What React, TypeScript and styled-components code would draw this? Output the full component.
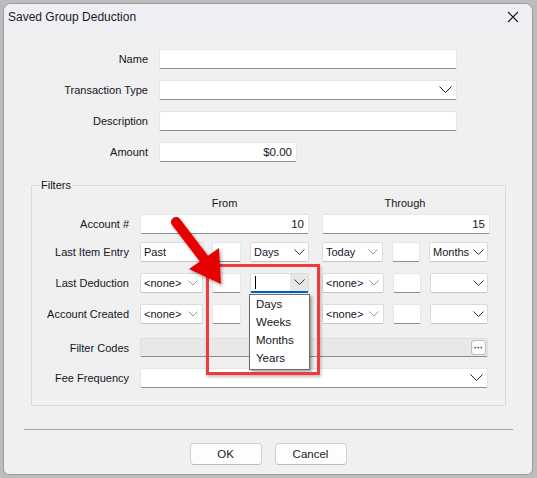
import React from 'react';
import styled, { createGlobalStyle } from 'styled-components';

const GlobalStyle = createGlobalStyle`
  html, body {
    margin: 0;
    padding: 0;
    background: #bcbcbc;
  }
  body {
    width: 537px;
    height: 478px;
    overflow: hidden;
    font-family: 'Liberation Sans', Arial, sans-serif;
    color: #14141f;
  }
`;

const Screen = styled.div`
  padding: 3px 4px 3px 3px;
  height: 478px;
  box-sizing: border-box;
`;

const Dialog = styled.div`
  position: relative;
  width: 530px;
  height: 472px;
  box-sizing: border-box;
  border: 1px solid #9c9c9c;
  border-radius: 8px 8px 6px 6px;
  background: #f0f0f0;
  overflow: hidden;
  display: flex;
  flex-direction: column;
`;

const TitleBar = styled.div`
  height: 26px;
  flex: none;
  background: #eff0f5;
  display: flex;
  align-items: center;
  justify-content: space-between;
  padding: 0 13px 0 4px;
`;

const Title = styled.span`
  font-size: 12px;
  color: #1a1a1a;
`;

const CloseButton = styled.button`
  border: none;
  background: none;
  padding: 0;
  width: 12px;
  height: 12px;
  display: flex;
`;

const Body = styled.div`
  flex: 1;
  display: flex;
  flex-direction: column;
  padding-top: 19px;
`;

const MainForm = styled.div`
  display: grid;
  grid-template-columns: 144px 298px;
  grid-auto-rows: 20px;
  column-gap: 11px;
  row-gap: 11px;
  align-items: center;
`;

const Label = styled.label`
  font-size: 11px;
  text-align: right;
  white-space: nowrap;
`;

const Field = styled.div<{ $width?: number; $align?: string; $disabled?: boolean }>`
  position: relative;
  box-sizing: border-box;
  height: 20px;
  width: ${({ $width }) => ($width ? `${$width}px` : '100%')};
  background: ${({ $disabled }) => ($disabled ? '#e8e8e8' : '#fff')};
  border: 1px solid ${({ $disabled }) => ($disabled ? '#dedede' : '#e6e6e6')};
  border-bottom-color: #8c8c8c;
  border-radius: 2px;
  display: flex;
  align-items: center;
  justify-content: ${({ $align }) => ($align === 'right' ? 'flex-end' : 'flex-start')};
  padding: 0 4px;
  font-size: 11.5px;
`;

const ComboBox = styled.div<{ $width?: number; $open?: boolean; $flat?: boolean }>`
  position: relative;
  box-sizing: border-box;
  height: 20px;
  width: ${({ $width }) => ($width ? `${$width}px` : '100%')};
  background: #fff;
  border: 1px solid ${({ $flat }) => ($flat ? '#e6e6e6' : '#dadada')};
  border-bottom: ${({ $open, $flat }) =>
    $open ? '2px solid #005fb8' : `1px solid ${$flat ? '#8c8c8c' : '#c4c4c4'}`};
  border-radius: 2px;
  display: flex;
  align-items: center;
  padding-left: 3px;
  font-size: 11.5px;
`;

const ComboText = styled.span`
  flex: 1;
  white-space: nowrap;
  overflow: hidden;
  font-size: 11px;
`;

const ChevronBox = styled.span<{ $hover?: boolean; $wide?: boolean }>`
  flex: none;
  width: ${({ $wide }) => ($wide ? '22px' : '18px')};
  align-self: stretch;
  display: flex;
  align-items: center;
  justify-content: center;
  background: ${({ $hover }) => ($hover ? '#e6e6e6' : 'transparent')};
`;

const Caret = styled.span`
  display: block;
  width: 1px;
  height: 13px;
  background: #000;
  margin-left: 1px;
`;

const Chevron = ({ color = '#333', w = 11 }: { color?: string; w?: number }) => (
  <svg width={w} height={Math.ceil(w / 2) + 1} viewBox={`0 0 ${w} ${Math.ceil(w / 2) + 1}`}>
    <polyline
      points={`0.5,0.5 ${w / 2},${w / 2} ${w - 0.5},0.5`}
      fill="none"
      stroke={color}
      strokeWidth="1"
    />
  </svg>
);

const Filters = styled.fieldset`
  margin: 17px 0 0 27px;
  width: 475px;
  box-sizing: border-box;
  border: 1px solid #d8d8d8;
  border-radius: 1px;
  padding: 5px 14px 17px 0;
`;

const Legend = styled.legend`
  font-size: 11px;
  padding: 0 2px;
  margin-left: 7px;
`;

const FilterRow = styled.div<{ $top: number; $height?: number }>`
  display: grid;
  grid-template-columns: 97px 169px 168px;
  column-gap: 11px;
  align-items: center;
  margin-top: ${({ $top }) => `${$top}px`};
  height: ${({ $height }) => `${$height ?? 20}px`};
  & > :nth-child(3) {
    margin-left: 2px;
  }
`;

const ColumnHead = styled.div`
  font-size: 11px;
  text-align: center;
`;

const Range = styled.div`
  display: flex;
  align-items: center;
  gap: 9px;
`;

const Span = styled.div`
  grid-column: 2 / span 2;
`;

const EllipsisButton = styled.button`
  position: absolute;
  right: 1px;
  top: 1px;
  width: 15px;
  height: 15px;
  padding: 0;
  box-sizing: border-box;
  border: 1px solid #bdbdbd;
  border-radius: 3px;
  background: #fdfdfd;
  font-size: 9px;
  line-height: 8px;
  font-weight: bold;
  color: #222;
  font-family: 'Liberation Sans', Arial, sans-serif;
`;

const DropList = styled.ul`
  position: absolute;
  left: -2px;
  top: 20px;
  width: 61px;
  margin: 0;
  padding: 0 0 2px;
  list-style: none;
  box-sizing: border-box;
  background: #fff;
  border: 1px solid #6b6b6b;
  box-shadow: 2px 2px 3px rgba(0, 0, 0, 0.35);
  z-index: 2;
`;

const DropItem = styled.li`
  height: 18px;
  line-height: 18px;
  padding-left: 6px;
  font-size: 11.5px;
`;

const Separator = styled.hr`
  margin: 23px 19px 0 20px;
  border: none;
  border-top: 1px solid #a5a5a5;
  height: 0;
`;

const Footer = styled.div`
  display: flex;
  justify-content: center;
  gap: 13px;
  margin-top: 13px;
`;

const Button = styled.button`
  width: 72px;
  height: 22px;
  box-sizing: border-box;
  border: 1px solid #d0d0d0;
  border-bottom-color: #bcbcbc;
  border-radius: 4px;
  background: #fdfdfd;
  font-size: 11.5px;
  color: #1a1a1a;
  font-family: 'Liberation Sans', Arial, sans-serif;
`;

const Highlight = styled.div`
  position: absolute;
  left: 202px;
  top: 260px;
  width: 114px;
  height: 111px;
  box-sizing: border-box;
  border: 3px solid #f03a3e;
  box-shadow: 1px 2px 3px rgba(0, 0, 0, 0.25);
  z-index: 3;
  pointer-events: none;
`;

const Pointer = styled.svg`
  position: absolute;
  left: 160px;
  top: 205px;
  z-index: 4;
  pointer-events: none;
`;

const units = ['Days', 'Weeks', 'Months', 'Years'];

// <none> / blank / unit triple used by the date filters
const DateRange = ({
  mode,
  unit,
  box,
  modeMuted = true,
  open = false,
}: {
  mode: string;
  unit?: string;
  box: number;
  modeMuted?: boolean;
  open?: boolean;
}) => (
  <Range>
    <ComboBox $width={63}>
      <ComboText>{mode}</ComboText>
      {modeMuted && (
        <ChevronBox>
          <Chevron color="#9a9a9a" w={10} />
        </ChevronBox>
      )}
    </ComboBox>
    <Field $width={box} />
    <ComboBox $width={59} $open={open}>
      <ComboText>{open ? <Caret /> : unit}</ComboText>
      <ChevronBox $hover={open}>
        <Chevron />
      </ChevronBox>
      {open && (
        <DropList>
          {units.map((u) => (
            <DropItem key={u}>{u}</DropItem>
          ))}
        </DropList>
      )}
    </ComboBox>
  </Range>
);

const App: React.FC = () => {
  return (
    <Screen>
      <GlobalStyle />
      <Dialog>
        <TitleBar>
          <Title>Saved Group Deduction</Title>
          <CloseButton aria-label="Close">
            <svg width="12" height="12" viewBox="0 0 12 12">
              <path d="M1 1 L11 11 M11 1 L1 11" stroke="#1a1a1a" strokeWidth="1.1" />
            </svg>
          </CloseButton>
        </TitleBar>

        <Body>
          <MainForm>
            <Label>Name</Label>
            <Field />
            <Label>Transaction Type</Label>
            <ComboBox $flat>
              <ComboText />
              <ChevronBox $wide>
                <Chevron w={13} color="#222" />
              </ChevronBox>
            </ComboBox>
            <Label>Description</Label>
            <Field />
            <Label>Amount</Label>
            <Field $width={138} $align="right">$0.00</Field>
          </MainForm>

          <Filters>
            <Legend>Filters</Legend>

            <FilterRow $top={0} $height={14}>
              <span />
              <ColumnHead>From</ColumnHead>
              <ColumnHead>Through</ColumnHead>
            </FilterRow>

            <FilterRow $top={4}>
              <Label>Account #</Label>
              <Field $align="right">10</Field>
              <Field $align="right">15</Field>
            </FilterRow>

            <FilterRow $top={8}>
              <Label>Last Item Entry</Label>
              <DateRange mode="Past" unit="Days" box={29} modeMuted={false} />
              <DateRange mode="Today" unit="Months" box={28} />
            </FilterRow>

            <FilterRow $top={11}>
              <Label>Last Deduction</Label>
              <DateRange mode="<none>" box={29} open />
              <DateRange mode="<none>" box={28} />
            </FilterRow>

            <FilterRow $top={11}>
              <Label>Account Created</Label>
              <DateRange mode="<none>" box={29} />
              <DateRange mode="<none>" box={28} />
            </FilterRow>

            <FilterRow $top={14} $height={19}>
              <Label>Filter Codes</Label>
              <Span>
                <Field $disabled style={{ height: 19 }}>
                  <EllipsisButton>···</EllipsisButton>
                </Field>
              </Span>
            </FilterRow>

            <FilterRow $top={11}>
              <Label>Fee Frequency</Label>
              <Span>
                <ComboBox $flat>
                  <ComboText />
                  <ChevronBox $wide>
                    <Chevron w={13} color="#222" />
                  </ChevronBox>
                </ComboBox>
              </Span>
            </FilterRow>
          </Filters>

          <Separator />
          <Footer>
            <Button>OK</Button>
            <Button>Cancel</Button>
          </Footer>
        </Body>

        <Highlight />
        <Pointer width="80" height="90" viewBox="0 0 80 90">
          <defs>
            <filter id="arrowShade" x="-20%" y="-20%" width="150%" height="150%">
              <feDropShadow dx="1.5" dy="2" stdDeviation="1.5" floodColor="#000" floodOpacity="0.35" />
            </filter>
          </defs>
          <g filter="url(#arrowShade)">
            <line x1="12" y1="13" x2="41" y2="51" stroke="#e60000" strokeWidth="10" strokeLinecap="round" />
            <polygon points="25,60 55,39 57,75" fill="#e60000" />
          </g>
        </Pointer>
      </Dialog>
    </Screen>
  );
};

export default App;
